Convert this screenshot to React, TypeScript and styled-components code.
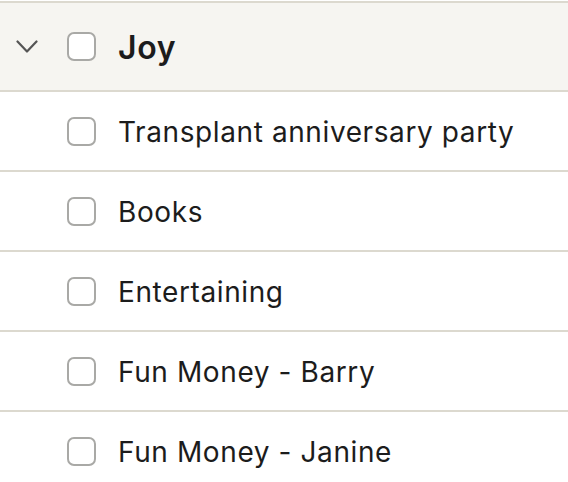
import React from "react";
import styled, { createGlobalStyle } from "styled-components";

const Global = createGlobalStyle`
  html, body { margin: 0; padding: 0; background: #ffffff; }
  body { font-family: Inter, "Noto Sans", sans-serif; color: #1c1c1c; }
`;

const List = styled.div`
  width: 568px;
  padding-top: 1px;
  display: flex;
  flex-direction: column;
`;

const Header = styled.div`
  display: flex;
  align-items: center;
  height: 87px;
  background: #f6f5f1;
  border-top: 2px solid #dcd9cf;
  border-bottom: 2px solid #dcd9cf;
  padding-left: 16px;
`;

const Row = styled.div`
  display: flex;
  align-items: center;
  height: 78px;
  border-bottom: 2px solid #dcd9cf;
  padding-left: 67px;
  &:last-child { border-bottom: none; }
`;

const Chevron = styled.svg`
  width: 22px;
  height: 14px;
  margin-right: 29px;
  flex-shrink: 0;
`;

const Box = styled.span`
  box-sizing: border-box;
  width: 29px;
  height: 29px;
  border: 2px solid #a9a9a6;
  border-radius: 7px;
  background: #ffffff;
  flex-shrink: 0;
  margin-right: 22px;
`;

const Label = styled.span<{ $bold?: boolean }>`
  font-size: ${(p) => (p.$bold ? "32px" : "28px")};
  font-weight: ${(p) => (p.$bold ? 600 : 400)};
  letter-spacing: ${(p) => (p.$bold ? "0.6px" : "0.6px")};
  line-height: 1;
  padding-top: 2px;
  color: #1c1c1c;
`;

const items = [
  "Transplant anniversary party",
  "Books",
  "Entertaining",
  "Fun Money - Barry",
  "Fun Money - Janine",
];

export default function App() {
  return (
    <>
      <Global />
      <List>
        <Header>
          <Chevron viewBox="0 0 22 14" fill="none">
            <path d="M1.5 1.5 L11 11.5 L20.5 1.5" stroke="#555" strokeWidth="2.2" strokeLinecap="round" strokeLinejoin="round" />
          </Chevron>
          <Box />
          <Label $bold>Joy</Label>
        </Header>
        {items.map((t) => (
          <Row key={t}>
            <Box />
            <Label>{t}</Label>
          </Row>
        ))}
      </List>
    </>
  );
}
